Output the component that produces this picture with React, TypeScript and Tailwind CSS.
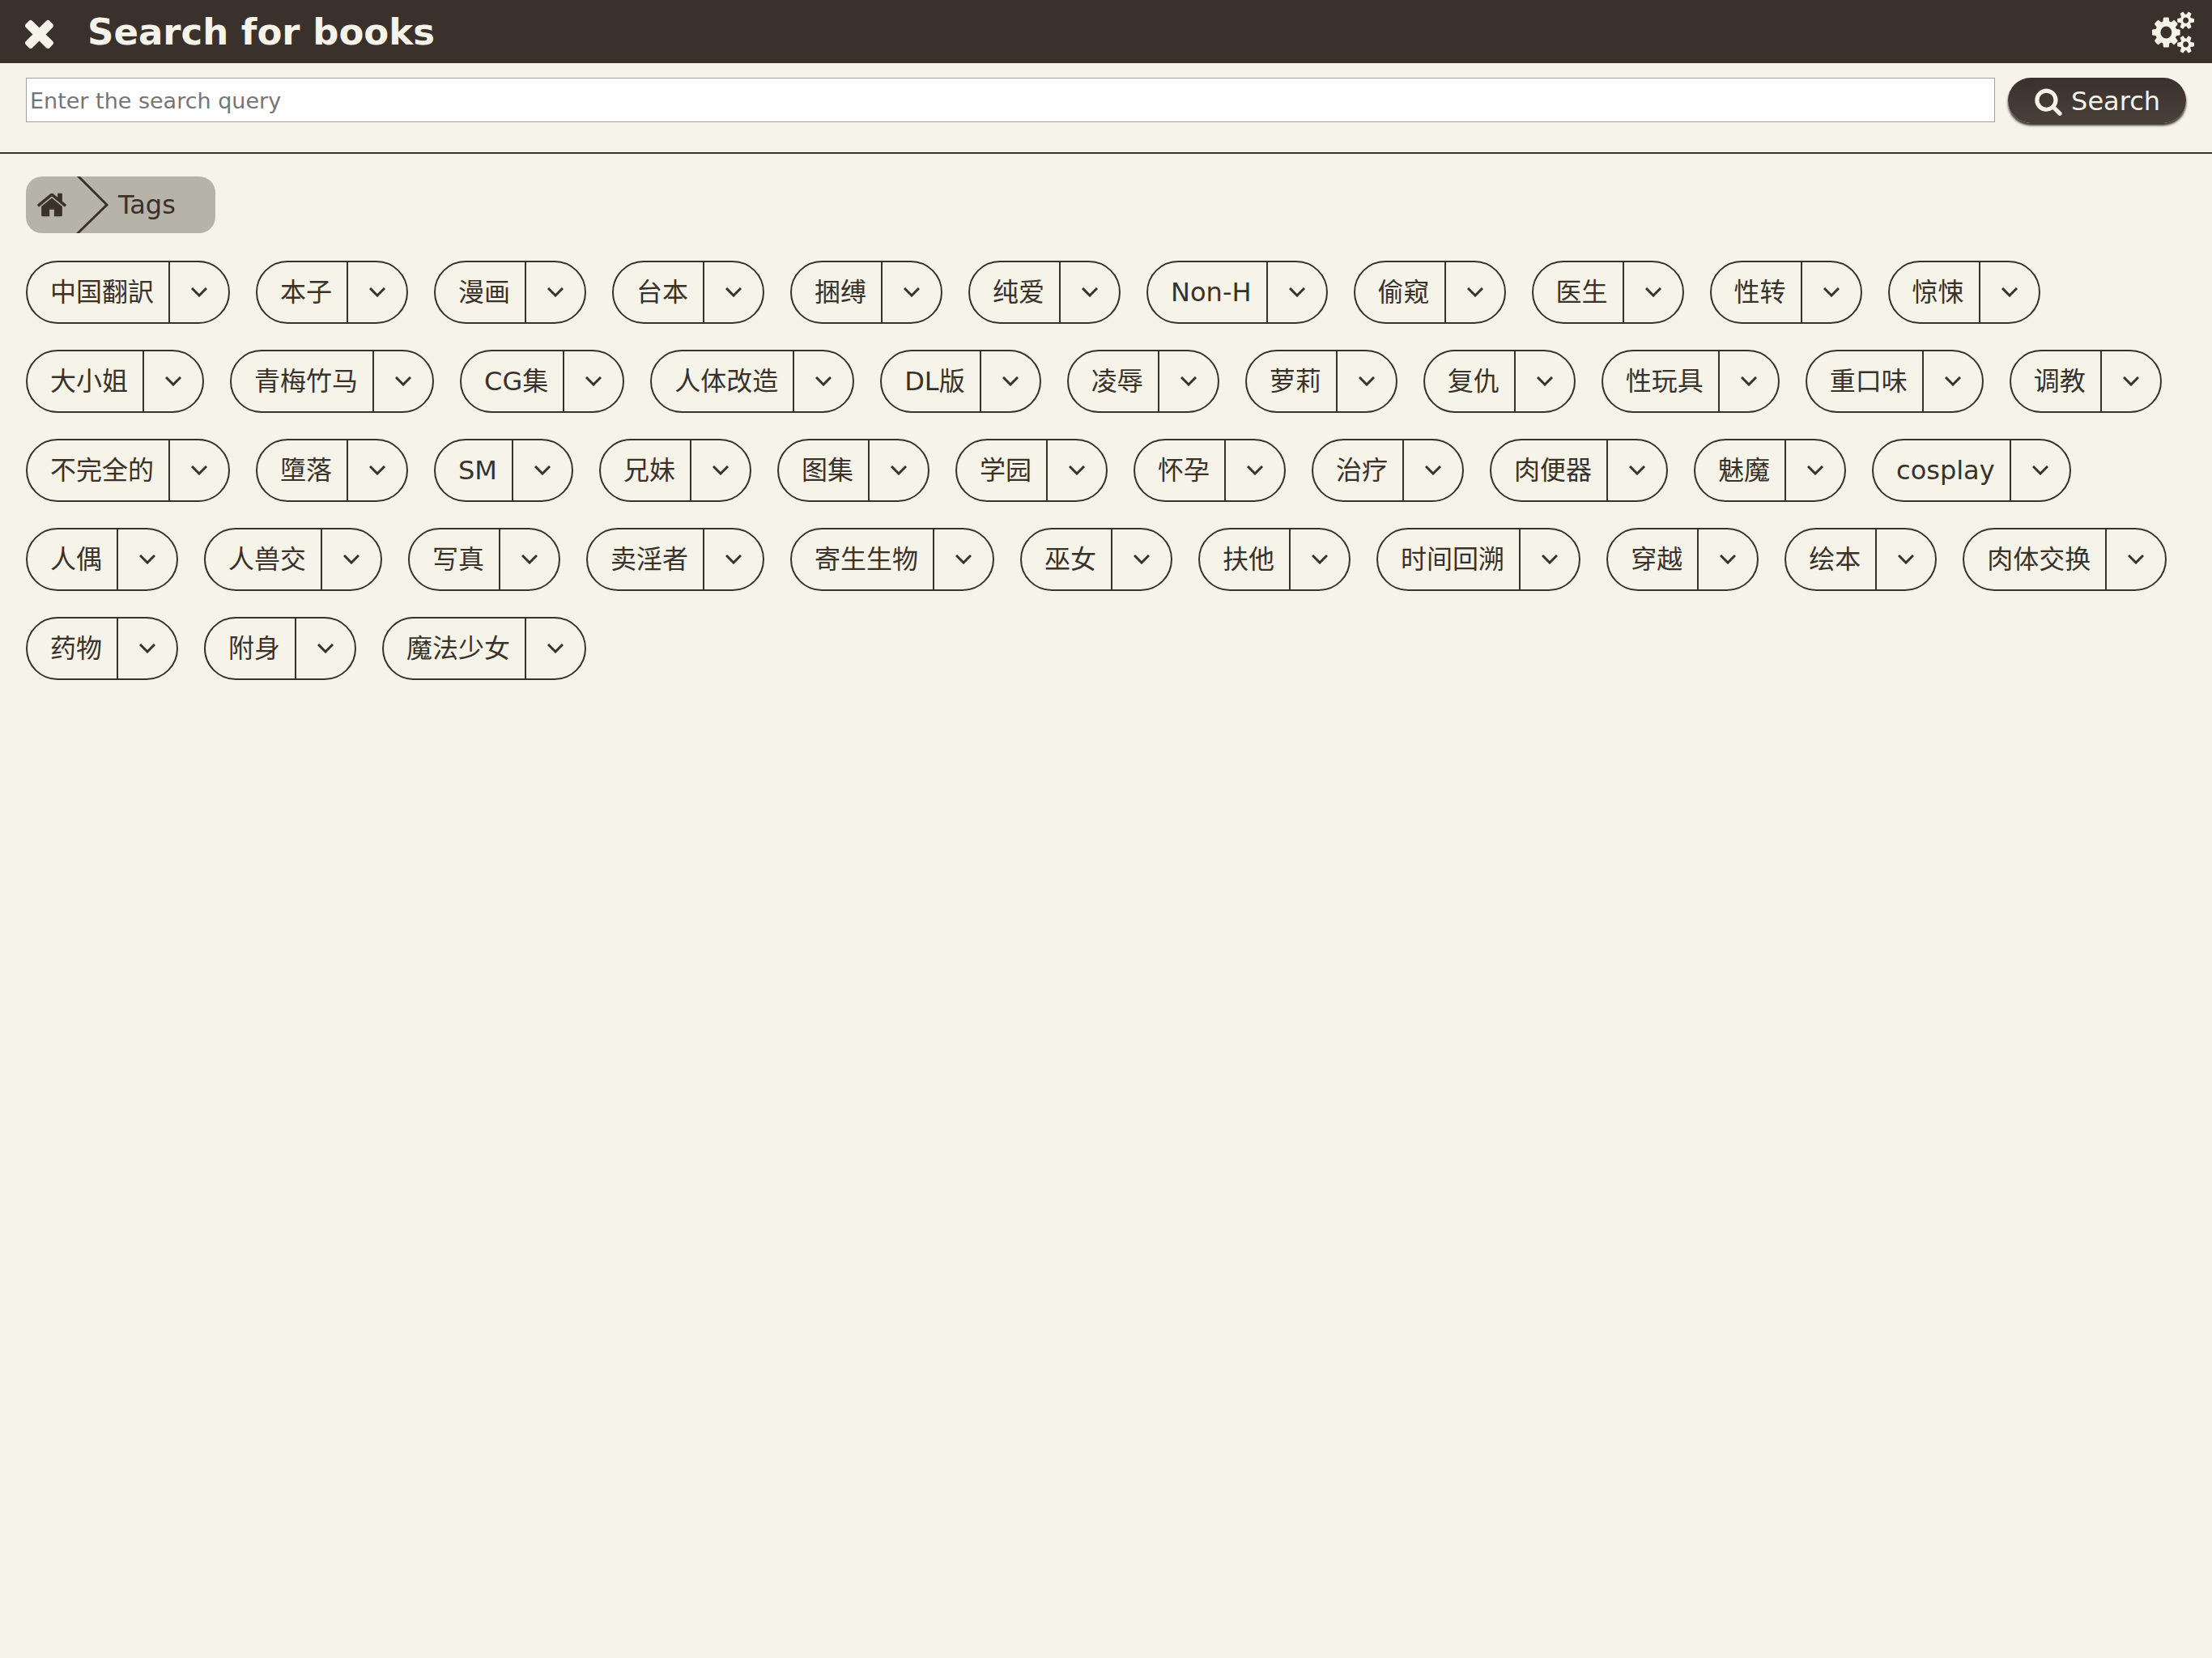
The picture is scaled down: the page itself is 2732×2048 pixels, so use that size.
import React from "react";

const TAGS = [
  "中国翻訳", "本子", "漫画", "台本", "捆缚", "纯爱", "Non-H", "偷窥", "医生", "性转", "惊悚",
  "大小姐", "青梅竹马", "CG集", "人体改造", "DL版", "凌辱", "萝莉", "复仇", "性玩具", "重口味", "调教",
  "不完全的", "墮落", "SM", "兄妹", "图集", "学园", "怀孕", "治疗", "肉便器", "魅魔", "cosplay",
  "人偶", "人兽交", "写真", "卖淫者", "寄生生物", "巫女", "扶他", "时间回溯", "穿越", "绘本", "肉体交换",
  "药物", "附身", "魔法少女",
];

const TIMES =
  "M1490 1322q0 40-28 68l-136 136q-28 28-68 28t-68-28l-294-294-294 294q-28 28-68 28t-68-28l-136-136q-28-28-28-68t28-68l294-294-294-294q-28-28-28-68t28-68l136-136q28-28 68-28t68 28l294 294 294-294q28-28 68-28t68 28l136 136q28 28 28 68t-28 68l-294 294 294 294q28 28 28 68z";
const MAGNIFIER =
  "M1216 832q0-185-131.500-316.500t-316.500-131.500-316.500 131.500-131.500 316.500 131.500 316.500 316.500 131.500 316.500-131.500 131.500-316.500zm512 832q0 52-38 90t-90 38q-54 0-90-38l-343-342q-179 124-399 124-143 0-273.500-55.500t-225-150-150-225-55.500-273.500 55.500-273.500 150-225 225-150 273.500-55.500 273.500 55.500 225 150 150 225 55.500 273.500q0 220-124 399l343 343q37 37 37 90z";
const HOME =
  "M1472 992v480q0 26-19 45t-45 19h-384v-384h-256v384h-384q-26 0-45-19t-19-45v-480q0-1 .5-3t.5-3l575-474 575 474q1 2 1 6zm223-69l-62 74q-8 9-21 11h-3q-13 0-21-7l-692-577-692 577q-12 8-24 7-13-2-21-11l-62-74q-8-10-7-23.500t11-21.500l719-599q32-26 76-26t76 26l244 204v-195q0-14 9-23t23-9h192q14 0 23 9t9 23v408l219 182q10 8 11 21.500t-7 23.500z";
const COGS =
  "M896 896q0-106-75-181t-181-75-181 75-75 181 75 181 181 75 181-75 75-181zm768 512q0-52-38-90t-90-38-90 38-38 90q0 53 37.500 90.500t90.500 37.500 90.500-37.500 37.500-90.500zm0-1024q0-52-38-90t-90-38-90 38-38 90q0 53 37.500 90.500t90.500 37.500 90.500-37.500 37.500-90.500zm-384 421v185q0 10-7 19.500t-16 10.500l-155 24q-11 35-32 76 34 48 90 115 7 11 7 20 0 12-7 19-23 30-82.500 89.500t-78.500 59.500q-11 0-21-7l-115-90q-37 19-77 31-11 108-23 155-7 24-30 24h-186q-11 0-20-7.500t-10-17.500l-23-153q-34-10-75-31l-118 89q-7 7-20 7-11 0-21-8-144-133-144-160 0-9 7-19 10-14 41-53t47-61q-23-44-35-82l-152-24q-10-1-17-9.500t-7-19.500v-185q0-10 7-19.500t16-10.500l155-24q11-35 32-76-34-48-90-115-7-11-7-20 0-12 7-20 22-30 82-89t79-59q11 0 21 7l115 90q34-18 77-32 11-108 23-154 7-24 30-24h186q11 0 20 7.500t10 17.500l23 153q34 10 75 31l118-89q8-7 20-7 11 0 21 8 144 133 144 160 0 8-7 19-12 16-42 54t-45 60q23 48 34 82l152 23q10 2 17 10.500t7 19.500zm640 533v140q0 16-149 31-12 27-30 52 51 113 51 138 0 4-4 7-122 71-124 71-8 0-46-47t-52-68q-20 2-30 2t-30-2q-14 21-52 68t-46 47q-2 0-124-71-4-3-4-7 0-25 51-138-18-25-30-52-149-15-149-31v-140q0-16 149-31 13-29 30-52-51-113-51-138 0-4 4-7 4-2 35-20t59-34 30-16q8 0 46 46.500t52 67.500q20-2 30-2t30 2q51-71 92-112l6-2q4 0 124 70 4 3 4 7 0 25-51 138 17 23 30 52 149 15 149 31zm0-1024v140q0 16-149 31-12 27-30 52 51 113 51 138 0 4-4 7-122 71-124 71-8 0-46-47t-52-68q-20 2-30 2t-30-2q-14 21-52 68t-46 47q-2 0-124-71-4-3-4-7 0-25 51-138-18-25-30-52-149-15-149-31v-140q0-16 149-31 13-29 30-52-51-113-51-138 0-4 4-7 4-2 35-20t59-34 30-16q8 0 46 46.500t52 67.500q20-2 30-2t30 2q51-71 92-112l6-2q4 0 124 70 4 3 4 7 0 25-51 138 17 23 30 52 149 15 149 31z";

function Icon({ d, className, viewBox = "0 0 1792 1792" }: { d: string; className: string; viewBox?: string }) {
  return (
    <svg viewBox={viewBox} preserveAspectRatio="none" className={className} fill="currentColor" aria-hidden="true">
      <path d={d} />
    </svg>
  );
}

function Header() {
  return (
    <header className="flex items-center bg-[#3a302c] pt-0.5 pr-[22px] pl-[22px] text-[#f6f3e9]">
      <button type="button" aria-label="Close">
        <Icon d={TIMES} className="size-[53px]" />
      </button>
      <h1 className="ml-[33px] flex-1 text-[45px] leading-[76px] font-bold">Search for books</h1>
      <button type="button" aria-label="Configure">
        <Icon d={COGS} viewBox="0 0 1920 1792" className="size-[52px]" />
      </button>
    </header>
  );
}

function SearchBar() {
  return (
    <form className="flex items-start gap-4 border-b-2 border-[#39322b] px-8 pt-[18px] pb-9" onSubmit={(e) => e.preventDefault()}>
      <input
        type="search"
        aria-label="Search query"
        placeholder="Enter the search query"
        className="h-[55px] min-w-0 flex-1 border border-[#a0a0a0] bg-white px-1 pt-0.5 text-[27px] placeholder:text-[#757575]"
      />
      <button
        type="submit"
        className="flex h-14 items-center gap-2.5 rounded-full bg-linear-to-b from-[#3a302c] to-[#49403b] px-8 pt-0.5 text-[32px] leading-[54px] text-[#f6f3e9] shadow-[0_3px_3px_#39322b]"
      >
        <Icon d={MAGNIFIER} className="size-9" />
        Search
      </button>
    </form>
  );
}

function Breadcrumb() {
  return (
    <nav aria-label="Breadcrumb" className="flex h-[70px] w-fit items-center overflow-hidden rounded-[20px] bg-[#b6b3a8]">
      <a href="#home" aria-label="Home" className="pl-3">
        <Icon d={HOME} className="size-10" />
      </a>
      <svg viewBox="0 0 40 70" className="ml-2.5 h-[70px] w-10" fill="none" stroke="currentColor" strokeWidth="3" aria-hidden="true">
        <path d="M2 -1L38 35L1 71" />
      </svg>
      <a href="#tags" className="pr-[49px] pl-3 text-[32px]">Tags</a>
    </nav>
  );
}

function Tag({ name }: { name: string }) {
  return (
    <li className="flex h-[78px] overflow-hidden rounded-[39px] border-2 border-current">
      <a href={"#" + name} className="pr-[18px] pl-7 leading-[75px]">{name}</a>
      <button type="button" aria-label={"More about " + name} className="flex w-[74px] items-center justify-center border-l-2 border-current">
        <svg viewBox="0 0 20 12" className="h-3 w-5" fill="none" stroke="currentColor" strokeWidth="3" aria-hidden="true">
          <path d="M1 1L10 10L19 1" />
        </svg>
      </button>
    </li>
  );
}

export default function App() {
  return (
    <div className="min-h-screen bg-[#f6f3e9] font-['DejaVu_Sans','Noto_Sans_CJK_SC',sans-serif] text-[#39322b]">
      <Header />
      <SearchBar />
      <main className="px-8 pt-7">
        <Breadcrumb />
        <ul className="mt-[34px] flex flex-wrap gap-8 text-[32px]">
          {TAGS.map((name) => (
            <Tag key={name} name={name} />
          ))}
        </ul>
      </main>
    </div>
  );
}
